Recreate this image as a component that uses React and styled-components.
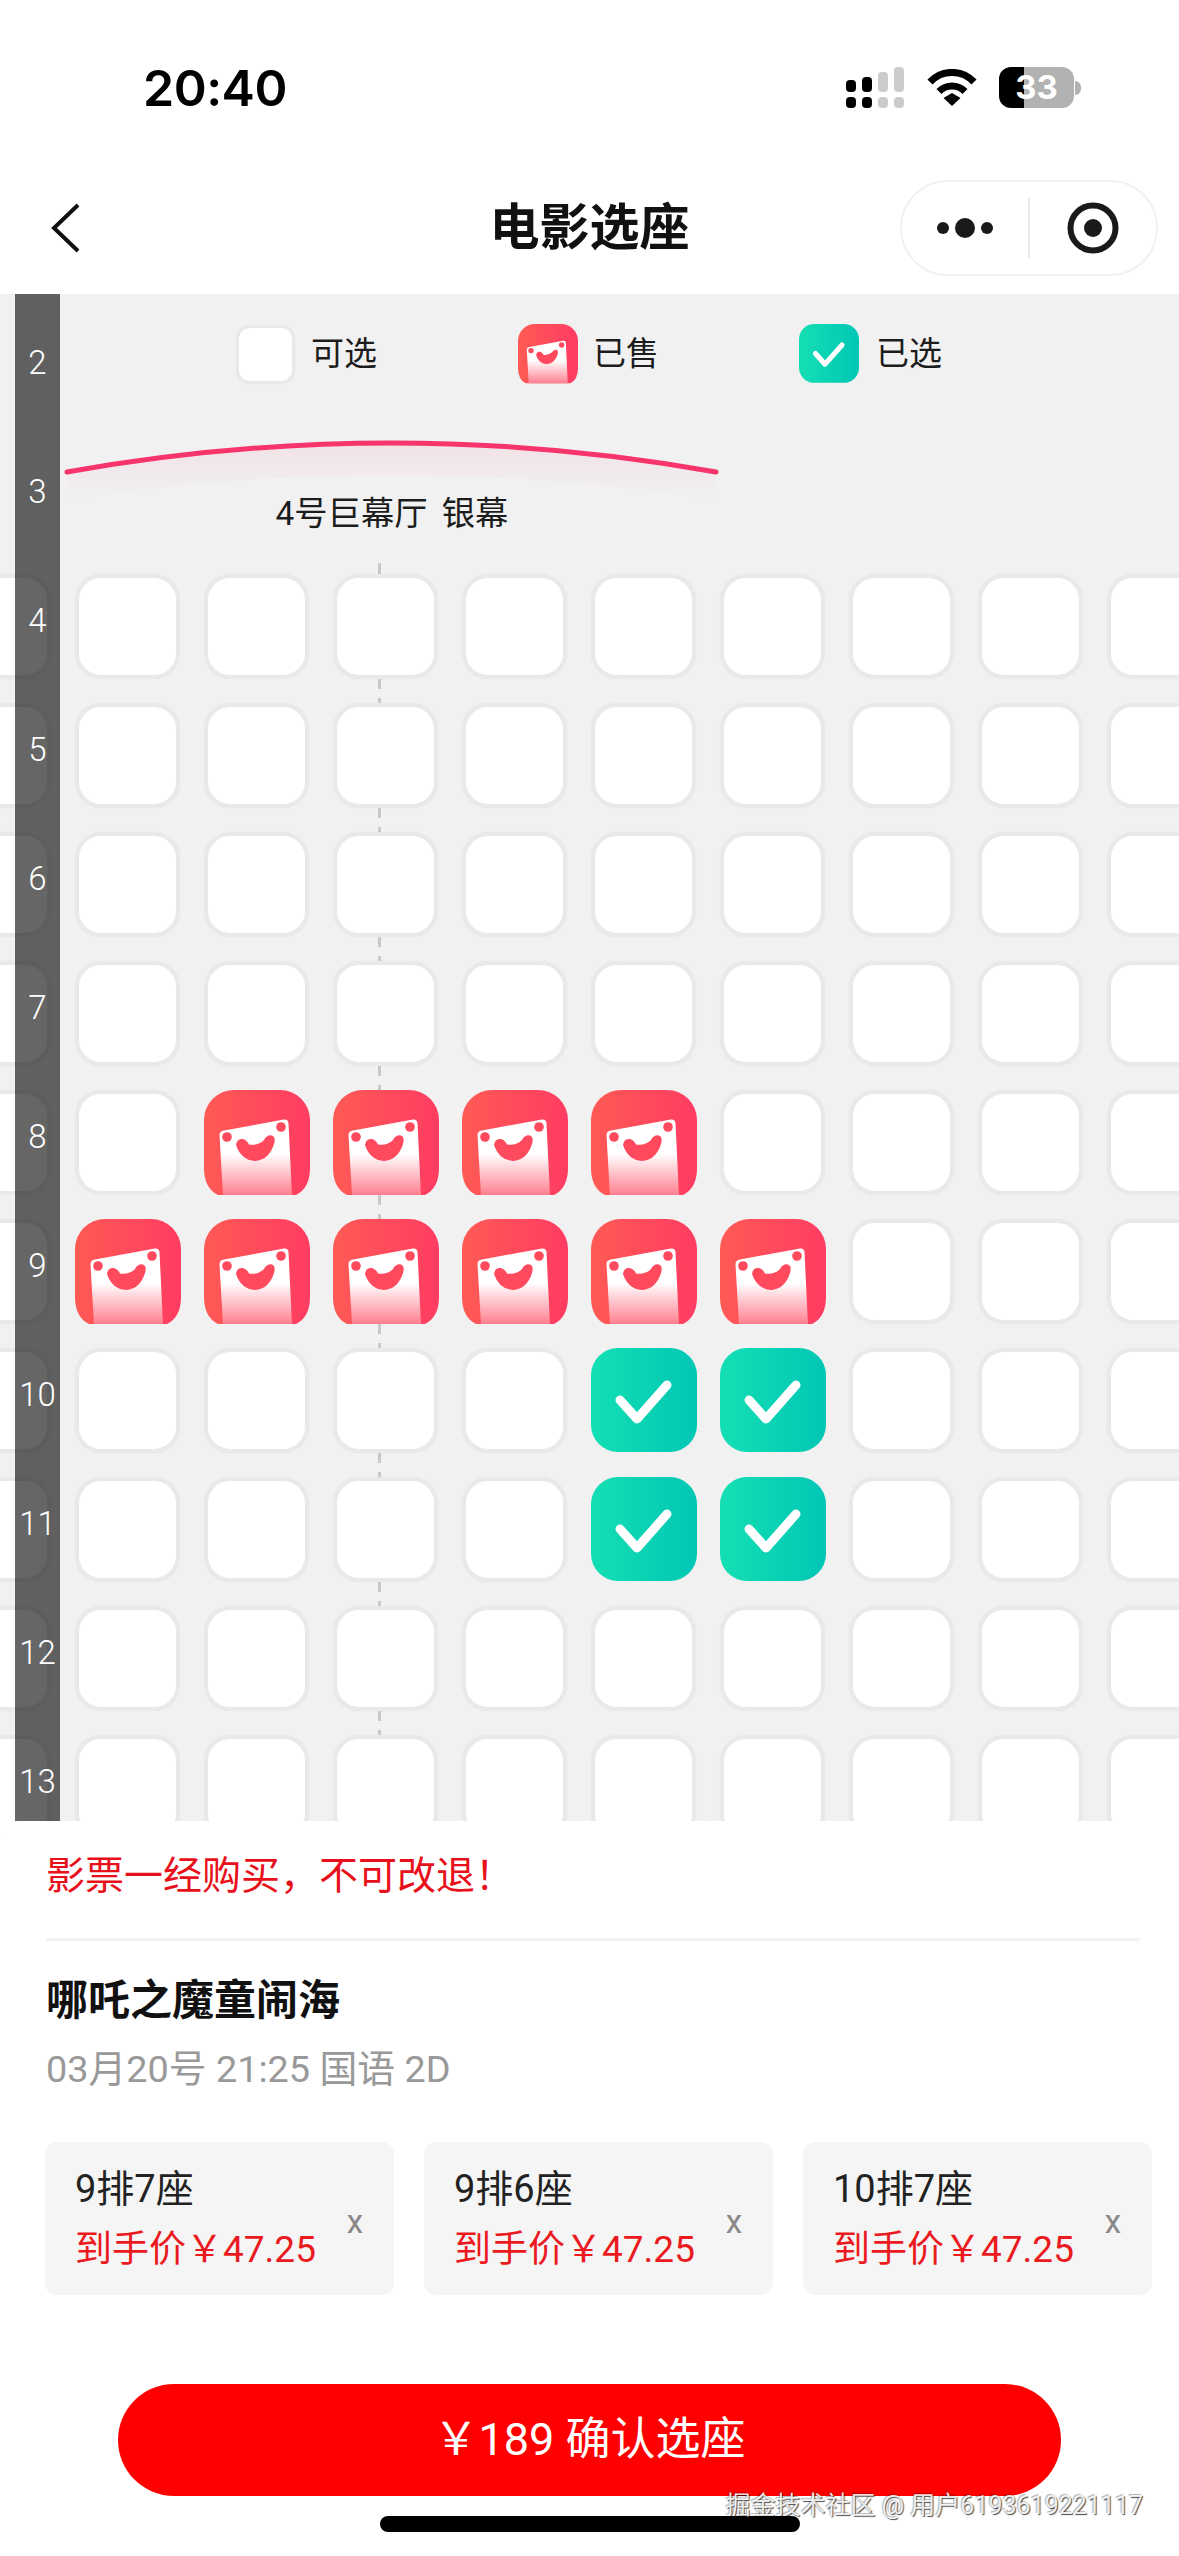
import React from "react";
import styled, { createGlobalStyle } from "styled-components";

const Global = createGlobalStyle`
  html, body { margin: 0; padding: 0; background: #fff; }
  * { box-sizing: border-box; }
  body { font-family: Roboto, "Noto Sans CJK SC", sans-serif; color: #111; }
`;

const Page = styled.div`
  width: 1179px;
  height: 2556px;
  display: flex;
  flex-direction: column;
  overflow: hidden;
  background: #fff;
`;

const StatusBar = styled.div`
  height: 180px;
  flex: none;
  display: flex;
  align-items: flex-start;
  justify-content: space-between;
  padding: 60px 98px 0 143px;
  font-family: Inter, sans-serif;
`;
const Time = styled.div`
  font-size: 50px;
  line-height: 56px;
  font-weight: 600;
  color: #000;
  letter-spacing: -0.5px;
`;
const StatusIcons = styled.div`
  display: flex;
  align-items: flex-start;
  margin-top: 7px;
`;
const Battery = styled.div`
  width: 75px;
  height: 41px;
  margin-left: 22px;
  border-radius: 12px;
  background: linear-gradient(to right, #000 33%, #b2b2b2 33%);
  color: #fff;
  font-size: 33px;
  line-height: 41px;
  font-weight: 700;
  text-align: center;
`;
const BatteryTip = styled.div`
  width: 6px;
  height: 14px;
  margin: 14px 0 0 1px;
  border-radius: 0 7px 7px 0;
  background: #b2b2b2;
`;

const Nav = styled.div`
  height: 114px;
  flex: none;
  display: grid;
  grid-template-columns: 1fr auto 1fr;
  align-items: center;
  padding: 0 21px 18px 21px;
`;
const BackSlot = styled.div`
  display: flex;
  padding-left: 30px;
`;
const NavTitle = styled.div`
  font-size: 50px;
  line-height: 60px;
  font-weight: 700;
  color: #111;
`;
const Capsule = styled.div`
  justify-self: end;
  width: 258px;
  height: 96px;
  border: 2px solid #f1f1f1;
  border-radius: 48px;
  display: flex;
  align-items: center;
  background: #fff;
`;
const CapsuleHalf = styled.div`
  flex: 1;
  display: flex;
  align-items: center;
  justify-content: center;
`;
const CapsuleLine = styled.div`
  width: 2px;
  height: 60px;
  background: #e8e8e8;
`;

const SeatMap = styled.div`
  flex: 1;
  min-height: 0;
  position: relative;
  overflow: hidden;
  background: #f1f1f1;
  margin-bottom: -16px;
`;
const Legend = styled.div`
  display: flex;
  align-items: center;
  height: 60px;
  margin-top: 30px;
  padding-left: 236px;
`;
const LegendItem = styled.div`
  display: flex;
  align-items: center;
  width: ${(p) => p.$width}px;
  gap: ${(p) => p.$gap}px;
  font-size: 33px;
  line-height: 40px;
  color: #1c1c1c;
`;
const FreeBox = styled.div`
  width: ${(p) => p.$size}px;
  height: ${(p) => p.$size}px;
  flex: none;
  background: #fff;
  border: ${(p) => p.$border}px solid #e9e9e9;
  border-radius: ${(p) => p.$radius}px;
  box-shadow: 0 0 1px #e2e2e2;
`;
const Screen = styled.div`
  margin: 56px 0 0 60px;
  width: 664px;
  height: 62px;
`;
const ScreenName = styled.div`
  width: 664px;
  margin-left: 60px;
  text-align: center;
  font-size: 33.3px;
  line-height: 40px;
  word-spacing: 6px;
  color: #1c1c1c;
  white-space: pre;
  height: 60px;
  margin-top: -8px;
`;
const SeatGrid = styled.div`
  position: relative;
  margin-top: 8px;
  margin-left: -66px;
  display: grid;
  grid-template-columns: repeat(10, 129px);
  grid-auto-rows: 129px;
  width: 1290px;
  &::before {
    content: "";
    position: absolute;
    left: 444px;
    top: 1px;
    bottom: 0;
    width: 3px;
    background:
      linear-gradient(#c8c8c8, #c8c8c8) 0 0 / 100% 12px no-repeat,
      repeating-linear-gradient(transparent -3px 6px, #c8c8c8 6px 126px);
  }
`;
const SeatCell = styled.div`
  position: relative;
  display: flex;
  align-items: center;
  justify-content: center;
`;
const RowRail = styled.div`
  position: absolute;
  top: 0;
  bottom: 0;
  left: 15px;
  width: 45px;
  padding-top: 4px;
  background: rgba(0, 0, 0, 0.6);
  display: flex;
  flex-direction: column;
`;
const RowNumber = styled.div`
  flex: none;
  height: 129px;
  display: flex;
  align-items: center;
  justify-content: center;
  color: #fff;
  font-size: 33px;
  font-weight: 300;
`;

const Sheet = styled.div`
  flex: none;
  position: relative;
  z-index: 2;
  height: 735px;
  padding: 30px 27px 0 46px;
  background: #fff;
  border-radius: 18px 18px 0 0;
`;
const Notice = styled.div`
  font-size: 39px;
  line-height: 50px;
  color: #e8101a;
`;
const Divider = styled.div`
  height: 3px;
  margin: 37px 12px 0 0;
  background: #f2f2f2;
`;
const MovieTitle = styled.div`
  margin-top: 35px;
  font-size: 42px;
  line-height: 50px;
  font-weight: 700;
  color: #111;
`;
const MovieMeta = styled.div`
  margin-top: 21px;
  font-size: 37.8px;
  line-height: 44px;
  color: #999;
`;
const Tickets = styled.div`
  margin-top: 51px;
  display: flex;
  gap: 30px;
  margin-left: -1px;
`;
const Ticket = styled.div`
  width: 349px;
  height: 153px;
  padding: 26px 31px 0 30px;
  display: flex;
  justify-content: space-between;
  background: #f5f5f5;
  border-radius: 12px;
`;
const TicketSeat = styled.div`
  font-size: 38px;
  line-height: 42px;
  color: #222;
`;
const TicketPrice = styled.div`
  margin-top: 19px;
  font-size: 37px;
  line-height: 42px;
  color: #ea1a1f;
  white-space: nowrap;
`;
const TicketClose = styled.div`
  font-size: 33px;
  line-height: 40px;
  margin-top: 34px;
  color: #888;
`;
const Confirm = styled.button`
  display: block;
  width: 943px;
  height: 112px;
  margin: 89px 0 0 72px;
  border: 0;
  border-radius: 56px;
  background: #ff0000;
  color: #fff;
  font-family: inherit;
  font-size: 45px;
  line-height: 112px;
  padding: 0;
  text-align: center;
`;
const HomeBar = styled.div`
  width: 420px;
  height: 16px;
  margin: 20px 0 0 334px;
  border-radius: 8px;
  background: #000;
`;
const Watermark = styled.div`
  position: absolute;
  right: 36px;
  bottom: 30px;
  font-size: 25px;
  line-height: 40px;
  color: rgba(255, 255, 255, 0.9);
  text-shadow: 1px 1px 1px rgba(0, 0, 0, 0.7), -1px -1px 1px rgba(0, 0, 0, 0.3);
  white-space: nowrap;
`;

const SignalIcon = () => (
  <svg width="58" height="41" viewBox="0 0 58 41">
    <rect x="0" y="13" width="10" height="12" rx="4" fill="#000" />
    <rect x="16" y="10" width="10" height="15" rx="4" fill="#000" />
    <rect x="32" y="5" width="10" height="20" rx="4" fill="#ccc" />
    <rect x="48" y="0" width="10" height="25" rx="4" fill="#ccc" />
    <rect x="0" y="30" width="10" height="11" rx="4" fill="#000" />
    <rect x="16" y="30" width="10" height="11" rx="4" fill="#000" />
    <rect x="32" y="30" width="10" height="11" rx="4" fill="#ccc" />
    <rect x="48" y="30" width="10" height="11" rx="4" fill="#ccc" />
  </svg>
);

const WifiIcon = () => (
  <svg width="50" height="37" viewBox="0 0 50 37" style={{ marginLeft: 23, marginTop: 2 }}>
    <path d="M3 13 A30 30 0 0 1 47 13" fill="none" stroke="#000" strokeWidth="7" />
    <path d="M12 22.5 A18 18 0 0 1 38 22.5" fill="none" stroke="#000" strokeWidth="7" />
    <path d="M16.5 29 L25 24 L33.5 29 L25 37 Z" fill="#000" />
  </svg>
);

const BackIcon = () => (
  <svg width="30" height="50" viewBox="0 0 30 50">
    <path d="M27 2 L3 25 L27 48" fill="none" stroke="#111" strokeWidth="4" />
  </svg>
);

const MoreIcon = () => (
  <svg width="60" height="24" viewBox="0 0 60 24">
    <circle cx="8" cy="12" r="6" fill="#1a1a1a" />
    <circle cx="30" cy="12" r="10" fill="#1a1a1a" />
    <circle cx="52" cy="12" r="6" fill="#1a1a1a" />
  </svg>
);

const TargetIcon = () => (
  <svg width="52" height="52" viewBox="0 0 52 52">
    <circle cx="26" cy="26" r="22.5" fill="none" stroke="#1a1a1a" strokeWidth="6" />
    <circle cx="26" cy="26" r="9" fill="#1a1a1a" />
  </svg>
);

const SoldIcon = ({ size, id }) => (
  <svg width={size} height={size} viewBox="0 0 106 106" style={{ flex: "none", position: "relative" }}>
    <defs>
      <linearGradient id={`sb${id}`} x1="0" y1="0" x2="1" y2="0">
        <stop offset="0" stopColor="#ff5a55" />
        <stop offset="1" stopColor="#ff3c62" />
      </linearGradient>
      <linearGradient id={`sf${id}`} x1="0" y1="0" x2="0" y2="1">
        <stop offset="0.45" stopColor="#fff" />
        <stop offset="1" stopColor="#ff7c8d" />
      </linearGradient>
      <clipPath id={`sc${id}`}>
        <path d="M30 0 H76 A30 30 0 0 1 106 30 V78 Q106 98 92 105 H14 Q0 98 0 78 V30 A30 30 0 0 1 30 0 Z" />
      </clipPath>
    </defs>
    <g clipPath={`url(#sc${id})`}>
      <rect width="106" height="106" fill={`url(#sb${id})`} />
      <path
        d="M15.5 45 Q15.5 41 20 40.5 L80 29.5 Q84 29 84.5 33 L88 106 L19 106 Z"
        fill={`url(#sf${id})`}
      />
      <circle cx="23" cy="47" r="4.8" fill="#ff4a5e" />
      <circle cx="77" cy="37" r="4.8" fill="#ff4a5e" />
      <path
        d="M32 55 Q33 48 39 49 Q43 50 45 54.5 Q54 56 60 50 Q63 44.5 68 45.5 Q72 47 70 54 Q65 70 51 71 Q37 70 32 55 Z"
        fill="#ff4a5e"
      />
    </g>
  </svg>
);

const PickedIcon = ({ size, id }) => (
  <svg width={size} height={size} viewBox="0 0 106 106" style={{ flex: "none", position: "relative" }}>
    <defs>
      <linearGradient id={`pb${id}`} x1="0" y1="0" x2="1" y2="0">
        <stop offset="0" stopColor="#14dfb3" />
        <stop offset="1" stopColor="#02c6b5" />
      </linearGradient>
    </defs>
    <rect width="106" height="104" rx="27" fill={`url(#pb${id})`} />
    <path
      d="M29 52 L46 71 L76 37"
      fill="none"
      stroke="#fff"
      strokeWidth="9"
      strokeLinecap="round"
      strokeLinejoin="round"
    />
  </svg>
);

const FreeSeat = styled(FreeBox)`
  position: relative;
`;

const rows = [4, 5, 6, 7, 8, 9, 10, 11, 12, 13];
const cols = [-1, 0, 1, 2, 3, 4, 5, 6, 7, 8];
const stateOf = (row, col) => {
  if (row === 8 && col >= 1 && col <= 4) return "sold";
  if (row === 9 && col >= 0 && col <= 5) return "sold";
  if ((row === 10 || row === 11) && (col === 4 || col === 5)) return "picked";
  return "free";
};

const railRows = [2, 3, ...rows];

const tickets = [
  { seat: "9排7座", price: "到手价￥47.25" },
  { seat: "9排6座", price: "到手价￥47.25" },
  { seat: "10排7座", price: "到手价￥47.25" },
];

export default function App() {
  return (
    <Page>
      <Global />
      <StatusBar>
        <Time>20:40</Time>
        <StatusIcons>
          <SignalIcon />
          <WifiIcon />
          <Battery>33</Battery>
          <BatteryTip />
        </StatusIcons>
      </StatusBar>
      <Nav>
        <BackSlot>
          <BackIcon />
        </BackSlot>
        <NavTitle>电影选座</NavTitle>
        <Capsule>
          <CapsuleHalf>
            <MoreIcon />
          </CapsuleHalf>
          <CapsuleLine />
          <CapsuleHalf>
            <TargetIcon />
          </CapsuleHalf>
        </Capsule>
      </Nav>
      <SeatMap>
        <Legend>
          <LegendItem $width={282} $gap={16}>
            <FreeBox $size={59} $border={3} $radius={14} />
            可选
          </LegendItem>
          <LegendItem $width={281} $gap={15}>
            <SoldIcon size={60} id="legend" />
            已售
          </LegendItem>
          <LegendItem $width={200} $gap={17}>
            <PickedIcon size={60} id="legend" />
            已选
          </LegendItem>
        </Legend>
        <Screen>
          <svg width="664" height="62" viewBox="0 0 664 62">
            <defs>
              <linearGradient id="glow" x1="0" y1="0" x2="0" y2="1">
                <stop offset="0" stopColor="#f8356b" stopOpacity="0.08" />
                <stop offset="1" stopColor="#f8356b" stopOpacity="0" />
              </linearGradient>
            </defs>
            <path d="M7 32 Q332 -26 656 32 L656 60 Q332 10 7 60 Z" fill="url(#glow)" />
            <path
              d="M7 32 Q332 -26 656 32"
              fill="none"
              stroke="#f7346c"
              strokeWidth="5"
              strokeLinecap="round"
            />
          </svg>
        </Screen>
        <ScreenName>4号巨幕厅 银幕</ScreenName>
        <SeatGrid>
          {rows.map((row) =>
            cols.map((col) => {
              const state = stateOf(row, col);
              const id = `${row}-${col}`;
              return (
                <SeatCell key={id}>
                  {state === "free" && <FreeSeat $size={105} $border={4} $radius={26} />}
                  {state === "sold" && <SoldIcon size={106} id={id} />}
                  {state === "picked" && <PickedIcon size={106} id={id} />}
                </SeatCell>
              );
            })
          )}
        </SeatGrid>
        <RowRail>
          {railRows.map((n) => (
            <RowNumber key={n}>{n}</RowNumber>
          ))}
        </RowRail>
      </SeatMap>
      <Sheet>
        <Notice>影票一经购买，不可改退！</Notice>
        <Divider />
        <MovieTitle>哪吒之魔童闹海</MovieTitle>
        <MovieMeta>03月20号 21:25 国语 2D</MovieMeta>
        <Tickets>
          {tickets.map((t) => (
            <Ticket key={t.seat}>
              <div>
                <TicketSeat>{t.seat}</TicketSeat>
                <TicketPrice>{t.price}</TicketPrice>
              </div>
              <TicketClose>x</TicketClose>
            </Ticket>
          ))}
        </Tickets>
        <Confirm>￥189 确认选座</Confirm>
        <HomeBar />
        <Watermark>掘金技术社区 @ 用户6193619221117</Watermark>
      </Sheet>
    </Page>
  );
}
